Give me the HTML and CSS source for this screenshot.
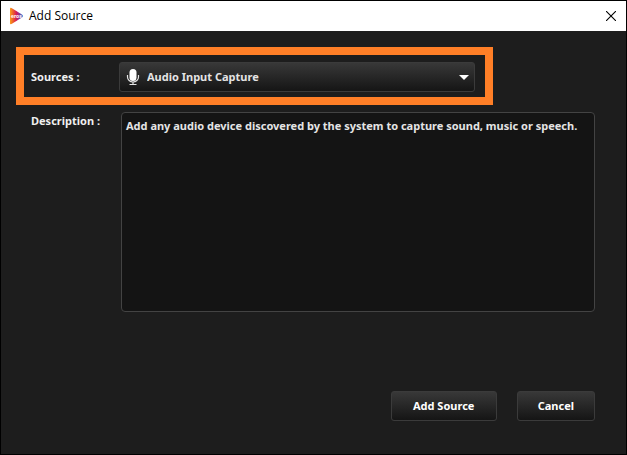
FILE: index.html
```
<!DOCTYPE html>
<html lang="en">
<head>
    <meta charset="UTF-8">
    <meta name="viewport" content="width=device-width, initial-scale=1.0">
    <title>Add Source</title>
    <link rel="stylesheet" href="styles.css">
</head>
<body>
    <div class="window">
        <header class="titlebar">
            <svg class="logo" width="16" height="18" viewBox="0 0 16 18" aria-hidden="true">
                <defs>
                    <linearGradient id="logo-fill" x1="0" y1="0" x2="1" y2="0">
                        <stop offset="0" stop-color="#f9a01b"/>
                        <stop offset="0.25" stop-color="#ee5a2c"/>
                        <stop offset="0.5" stop-color="#d3195c"/>
                        <stop offset="0.75" stop-color="#7b3fa0"/>
                        <stop offset="1" stop-color="#2f8fe0"/>
                    </linearGradient>
                </defs>
                <path d="M2 1.5 Q2 .5 3.5 1 L14 7.5 Q16 9 14 10.5 L3.5 17 Q2 17.5 2 16.5 Z" fill="url(#logo-fill)"/>
                <text class="logo-text" x="3" y="11">eros</text>
            </svg>
            <h1 class="title">Add Source</h1>
            <button class="close" type="button" aria-label="Close">
                <svg width="10" height="10" viewBox="0 0 10 10"><path d="M0 0L10 10M10 0L0 10" stroke="#000" stroke-width="1.1"/></svg>
            </button>
        </header>

        <form class="content">
            <div class="source-row">
                <label for="source">Sources :</label>
                <div class="select-wrap">
                    <svg class="mic" width="14" height="18" viewBox="0 0 14 18" aria-hidden="true">
                        <rect x="3.5" y="1" width="7" height="12" rx="3.5" fill="#fff"/>
                        <path d="M1.5 7v2a5.5 5 0 0 0 11 0v-2M7 14v2M3.5 16.5h7" fill="none" stroke="#e4e4e4" stroke-width="1.2"/>
                    </svg>
                    <select id="source">
                        <option>Audio Input Capture</option>
                    </select>
                    <svg class="arrow" width="10" height="5" viewBox="0 0 10 5" aria-hidden="true"><path d="M0 0h10L5 5z" fill="#fff"/></svg>
                </div>
            </div>

            <div class="description-row">
                <label for="description">Description :</label>
                <textarea id="description" readonly>Add any audio device discovered by the system to capture sound, music or speech.</textarea>
            </div>

            <div class="actions">
                <button class="btn btn-add" type="submit">Add Source</button>
                <button class="btn" type="button">Cancel</button>
            </div>
        </form>
    </div>
</body>
</html>
```
FILE: styles.css
```
* {
    box-sizing: border-box;
}
body {
    margin: 0;
    background-color: #1d1d1d;
    color: #f0f0f0;
    font-family: "Noto Sans", "Open Sans", sans-serif;
    font-size: 11px;
    font-weight: 700;
    line-height: 18px;
}
.window {
    display: flex;
    flex-direction: column;
    min-height: 100vh;
    border: 1px solid #000;
}

/* title bar */
.titlebar {
    display: flex;
    align-items: center;
    height: 30px;
    padding: 0 10px 0 7px;
    background-color: #fff;
    color: #000;
}
.logo-text {
    fill: #fff;
    font-size: 5px;
}
.title {
    flex: 1;
    margin: 0 0 0 5px;
    font-family: "Open Sans", sans-serif;
    font-size: 12px;
    font-weight: 400;
}
.close {
    display: flex;
    padding: 0;
    border: none;
    background: none;
    cursor: pointer;
}

/* form */
.content {
    flex: 1;
    display: flex;
    flex-direction: column;
    padding: 16px 31px 33px 15px;
}
.source-row {
    display: flex;
    align-items: center;
    margin-right: 102px;
    padding: 7px 10px 5px 7px;
    border: 8px solid #ff7f27;
}
.source-row label {
    width: 88px;
}
.select-wrap {
    position: relative;
    flex: 1;
}
select,
.btn {
    height: 30px;
    border: 1px solid #3b3b3b;
    border-radius: 3px;
    background: linear-gradient(#383838, #151515);
    color: #f0f0f0;
    font: inherit;
}
select {
    display: block;
    width: 100%;
    padding: 0 24px 0 27px;
    appearance: none;
    color: #e4e4e4;
}
.mic,
.arrow {
    position: absolute;
    pointer-events: none;
}
.mic {
    top: 6px;
    left: 7px;
}
.arrow {
    top: 13px;
    right: 6px;
}
.description-row {
    display: flex;
    margin-top: 7px;
    padding-left: 15px;
}
.description-row label {
    width: 90px;
}
textarea {
    flex: 1;
    height: 200px;
    padding: 4px;
    border: 1px solid #434343;
    border-radius: 4px;
    background-color: #141414;
    color: #e4e4e4;
    font: inherit;
    resize: none;
    outline: none;
}
.actions {
    display: flex;
    justify-content: flex-end;
    gap: 20px;
    margin-top: auto;
    padding-top: 20px;
}
.btn {
    padding: 0 20px;
    color: #fff;
    cursor: pointer;
}
.btn-add {
    min-width: 106px;
}
```
